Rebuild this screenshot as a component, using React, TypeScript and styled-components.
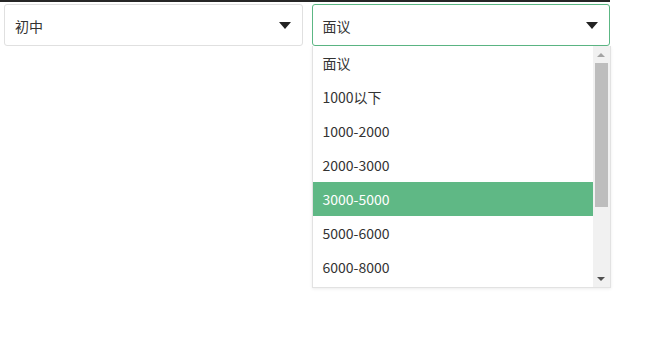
import styled, { createGlobalStyle } from 'styled-components';

const GlobalStyle = createGlobalStyle`
  html, body {
    margin: 0;
    padding: 0;
    background: #fff;
  }
  body {
    font-family: "Noto Sans CJK SC", "Noto Sans", sans-serif;
    color: #333;
  }
`;

// only the rows visible in the open list
const salaryOptions = [
  '面议',
  '1000以下',
  '1000-2000',
  '2000-3000',
  '3000-5000',
  '5000-6000',
  '6000-8000',
];

export default function App() {
  return (
    <>
      <GlobalStyle />
      <Page>
        <Row>
          <SelectWrap>
            <SelectBox>
              <Value>初中</Value>
              <Caret />
            </SelectBox>
          </SelectWrap>

          <SelectWrap>
            <SelectBox $open>
              <Value>面议</Value>
              <Caret />
            </SelectBox>
            <Dropdown>
              <OptionList>
                {salaryOptions.map((opt) => (
                  <Option key={opt} $active={opt === '3000-5000'}>
                    {opt}
                  </Option>
                ))}
              </OptionList>
              <ScrollBar>
                <ScrollArrow $up $dim />
                <Track>
                  <Thumb />
                </Track>
                <ScrollArrow />
              </ScrollBar>
            </Dropdown>
          </SelectWrap>
        </Row>
      </Page>
    </>
  );
}

const Page = styled.div`
  width: 610px;
  height: 346px;
  border-top: 2px solid #262626;
  padding: 2px 0 0 4px;
  box-sizing: border-box;
`;

const Row = styled.div`
  display: flex;
  gap: 9px;
`;

const SelectWrap = styled.div`
  position: relative;
  width: 299px;
`;

const SelectBox = styled.div<{ $open?: boolean }>`
  display: flex;
  align-items: center;
  justify-content: space-between;
  height: 42px;
  box-sizing: border-box;
  padding: 0 11px 0 10px;
  border: 1px solid ${(p) => (p.$open ? '#5cb784' : '#e0e0e0')};
  border-radius: 3px;
  background: #fff;
  cursor: pointer;
`;

const Value = styled.span`
  font-size: 14px;
  color: #333;
  line-height: 20px;
  margin-top: 1px;
`;

const Caret = styled.span`
  width: 0;
  height: 0;
  border-left: 6px solid transparent;
  border-right: 6px solid transparent;
  border-top: 7px solid #222;
`;

const Dropdown = styled.div`
  position: absolute;
  top: 42px;
  left: 0;
  width: 299px;
  height: 242px;
  box-sizing: border-box;
  display: flex;
  border: 1px solid #e2e2e2;
  border-top: none;
  background: #fff;
  box-shadow: 0 1px 3px rgba(0, 0, 0, 0.08);
  z-index: 10;
`;

const OptionList = styled.ul`
  flex: 1;
  list-style: none;
  margin: 0;
  padding: 0;
`;

const Option = styled.li<{ $active?: boolean }>`
  height: 34px;
  display: flex;
  align-items: center;
  padding-left: 10px;
  font-size: 14px;
  color: ${(p) => (p.$active ? '#fff' : '#333')};
  background: ${(p) => (p.$active ? '#5fb885' : '#fff')};
`;

const ScrollBar = styled.div`
  width: 17px;
  display: flex;
  flex-direction: column;
  background: #f1f1f1;
`;

const ScrollArrow = styled.div<{ $up?: boolean; $dim?: boolean }>`
  height: 17px;
  display: flex;
  align-items: center;
  justify-content: center;

  &::before {
    content: '';
    width: 0;
    height: 0;
    border-left: 4px solid transparent;
    border-right: 4px solid transparent;
    ${(p) =>
      p.$up
        ? `border-bottom: 4px solid ${p.$dim ? '#a3a3a3' : '#505050'};`
        : `border-top: 4px solid ${p.$dim ? '#a3a3a3' : '#505050'};`}
  }
`;

const Track = styled.div`
  flex: 1;
  padding: 0 2px;
`;

const Thumb = styled.div`
  height: 144px;
  background: #bdbdbd;
`;
